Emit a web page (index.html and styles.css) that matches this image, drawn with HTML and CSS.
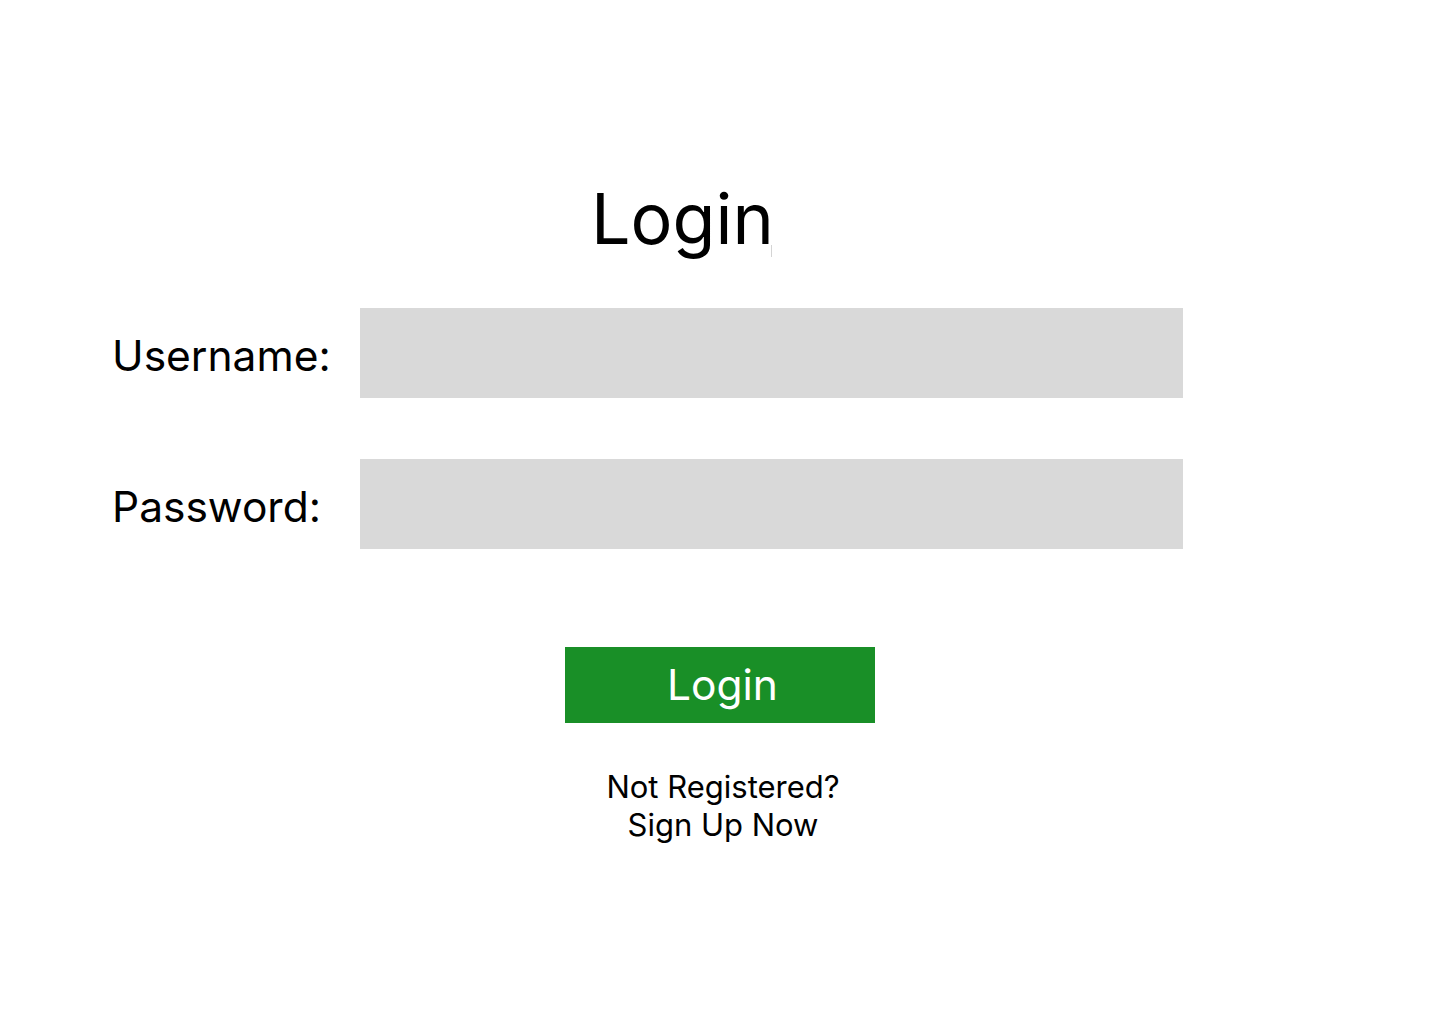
FILE: index.html
```html
<!DOCTYPE html>
<html lang="en">
<head>
<meta charset="utf-8">
<title>Login</title>
<link rel="stylesheet" href="styles.css">
</head>
<body>
<main class="page">
  <h1 class="title">Login<span class="caret"></span></h1>
  <form class="form">
    <div class="row">
      <label class="label" for="username">Username:</label>
      <input class="field" id="username" type="text">
    </div>
    <div class="row">
      <label class="label" for="password">Password:</label>
      <input class="field" id="password" type="password">
    </div>
    <button class="btn" type="button">Login</button>
  </form>
  <p class="signup">Not Registered?<br>Sign Up Now</p>
</main>
</body>
</html>
```
FILE: styles.css
```css
html, body {
  margin: 0;
  padding: 0;
  background: #ffffff;
}
body {
  font-family: Inter, "Noto Sans", sans-serif;
  color: #000000;
  width: 1440px;
  height: 1024px;
  overflow: hidden;
}
.page {
  display: flex;
  flex-direction: column;
  padding-top: 175px;
}
.title {
  margin: 0 0 0 591px;
  font-size: 70px;
  font-weight: 400;
  line-height: 88px;
  height: 88px;
  position: relative;
}
.caret {
  position: absolute;
  left: 180px;
  top: 70px;
  width: 1px;
  height: 12px;
  background: #d4d4d4;
}
.form {
  display: flex;
  flex-direction: column;
  margin-top: 45px;
}
.row {
  display: grid;
  grid-template-columns: 248px 823px;
  align-items: center;
  padding-left: 112px;
  height: 90px;
  margin-bottom: 61px;
}
.row + .row {
  margin-bottom: 0;
}
.label {
  font-size: 42.5px;
  line-height: 52px;
  padding-top: 6px;
}
.field {
  height: 90px;
  border: 0;
  margin: 0;
  padding: 0;
  background: #d9d9d9;
  outline: none;
}
.btn {
  margin: 98px 0 0 565px;
  width: 310px;
  height: 76px;
  border: 0;
  padding: 0 0 0 5px;
  background: #198f27;
  color: #ffffff;
  font-family: Inter, "Noto Sans", sans-serif;
  font-size: 42.5px;
  line-height: 52px;
  cursor: pointer;
}
.signup {
  margin: 45px 0 0 573px;
  width: 300px;
  text-align: center;
  font-size: 31px;
  line-height: 38px;
}
```
